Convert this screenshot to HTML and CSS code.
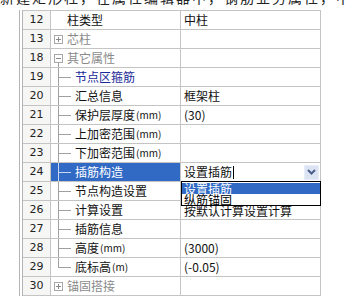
FILE: index.html
```html
<!DOCTYPE html>
<html lang="zh-CN">
<head>
	<meta charset="UTF-8">
	<title>属性编辑</title>
	<link rel="stylesheet" href="styles.css">
</head>
<body>
	<div class="caption"><p>新建矩形柱，在属性编辑器中，钢筋业务属性，中柱，插筋信息</p></div>
	<div class="sheet">
		<div class="grid">
			<div class="row">
				<div class="num">12</div>
				<div class="label plain">柱类型</div>
				<div class="value">中柱</div>
			</div>
			<div class="row">
				<div class="num">13</div>
				<div class="label group"><span class="box plus"></span>芯柱</div>
				<div class="value"></div>
			</div>
			<div class="row">
				<div class="num">18</div>
				<div class="label group open"><span class="box"></span>其它属性</div>
				<div class="value"></div>
			</div>
			<div class="row">
				<div class="num">19</div>
				<div class="label child blue">节点区箍筋</div>
				<div class="value"></div>
			</div>
			<div class="row">
				<div class="num">20</div>
				<div class="label child">汇总信息</div>
				<div class="value">框架柱</div>
			</div>
			<div class="row">
				<div class="num">21</div>
				<div class="label child">保护层厚度<small>(mm)</small></div>
				<div class="value">(30)</div>
			</div>
			<div class="row">
				<div class="num">22</div>
				<div class="label child">上加密范围<small>(mm)</small></div>
				<div class="value"></div>
			</div>
			<div class="row">
				<div class="num">23</div>
				<div class="label child">下加密范围<small>(mm)</small></div>
				<div class="value"></div>
			</div>
			<div class="row">
				<div class="num">24</div>
				<div class="label child selected">插筋构造</div>
				<div class="value combo">
					<span class="combo-text">设置插筋</span><span class="caret"></span>
					<span class="arrow">
						<svg width="9" height="6" viewBox="0 0 9 6"><path d="M1 1 L4.5 4.5 L8 1" fill="none" stroke="#4a5f8c" stroke-width="2"/></svg>
					</span>
					<ul class="list">
						<li class="on">设置插筋</li>
						<li>纵筋锚固</li>
					</ul>
				</div>
			</div>
			<div class="row">
				<div class="num">25</div>
				<div class="label child">节点构造设置</div>
				<div class="value"></div>
			</div>
			<div class="row">
				<div class="num">26</div>
				<div class="label child">计算设置</div>
				<div class="value low">按默认计算设置计算</div>
			</div>
			<div class="row">
				<div class="num">27</div>
				<div class="label child">插筋信息</div>
				<div class="value"></div>
			</div>
			<div class="row">
				<div class="num">28</div>
				<div class="label child">高度<small>(mm)</small></div>
				<div class="value">(3000)</div>
			</div>
			<div class="row">
				<div class="num">29</div>
				<div class="label child last">底标高<small>(m)</small></div>
				<div class="value">(-0.05)</div>
			</div>
			<div class="row">
				<div class="num">30</div>
				<div class="label group"><span class="box plus"></span>锚固搭接</div>
				<div class="value"></div>
			</div>
		</div>
	</div>
</body>
</html>
```

FILE: styles.css
```css
body{
	margin: 0;
	background: #fff;
	font-family: "Noto Sans CJK SC", "Liberation Sans", sans-serif;
	font-size: 12px;
	color: #111;
}
.caption{
	height: 10px;
	overflow: hidden;
}
.caption p{
	margin: -10px 0 0 0;
	font-size: 14px;
	line-height: 14px;
	white-space: nowrap;
	color: #222;
	letter-spacing: 2px;
}
.sheet{
	margin-left: 19px;
	width: 302px;
	border-left: 1px solid #b4b4b4;
	padding-left: 2px;
}
.grid{
	width: 298px;
	border-left: 1px solid #b4b4b4;
	border-top: 1px solid #c4c4c4;
}
.row{
	display: grid;
	grid-template-columns: 28px 130px 140px;
	height: 19px;
	border-bottom: 1px solid #c4c4c4;
	box-sizing: border-box;
}
.row > div{
	border-right: 1px solid #c4c4c4;
	height: 18px;
	line-height: 18px;
	white-space: nowrap;
	overflow: hidden;
}
.num{
	background: #f6f6f4;
	text-align: center;
	font-family: "DejaVu Sans", sans-serif;
	font-size: 11px;
	color: #222;
}
.label{
	display: flex;
	align-items: center;
}
.label small{
	font-size: 10px;
	margin-left: 1px;
}
.plain{
	padding-left: 16px;
}
.group{
	color: #8a8a8a;
}
.box{
	width: 7px;
	height: 7px;
	border: 1px solid #a8a8a8;
	margin: 0 4px 0 3px;
	background:
		linear-gradient(#8a8a8a,#8a8a8a) no-repeat 1px 3px / 5px 1px;
}
.box.plus{
	background:
		linear-gradient(#8a8a8a,#8a8a8a) no-repeat 1px 3px / 5px 1px,
		linear-gradient(#8a8a8a,#8a8a8a) no-repeat 3px 1px / 1px 5px;
}
.open{
	background: linear-gradient(#a0a0a0,#a0a0a0) no-repeat 7px 14px / 1px 4px;
}
.child{
	padding-left: 24px;
	background:
		linear-gradient(#a0a0a0,#a0a0a0) no-repeat 7px 0 / 1px 100%,
		linear-gradient(#a0a0a0,#a0a0a0) no-repeat 7px 9px / 13px 1px;
}
.child.last{
	background:
		linear-gradient(#a0a0a0,#a0a0a0) no-repeat 7px 0 / 1px 10px,
		linear-gradient(#a0a0a0,#a0a0a0) no-repeat 7px 9px / 13px 1px;
}
.blue{
	color: #1a2a9a;
}
.child.selected{
	color: #fff;
	background:
		linear-gradient(#c9d6f0,#c9d6f0) no-repeat 7px 0 / 1px 100%,
		linear-gradient(#c9d6f0,#c9d6f0) no-repeat 7px 9px / 13px 1px,
		#316ac5;
}
.value{
	padding-left: 3px;
}
.row > .low{
	line-height: 20px;
}
.row > .combo{
	position: relative;
	display: flex;
	align-items: center;
	overflow: visible;
}
.caret{
	width: 1px;
	height: 13px;
	background: #000;
	margin-left: 1px;
}
.arrow{
	margin-left: auto;
	margin-right: 1px;
	width: 15px;
	height: 15px;
	background: #dce4f4;
	border: 1px solid #e8eef9;
	box-sizing: border-box;
	display: flex;
	align-items: center;
	justify-content: center;
}
.list{
	position: absolute;
	left: 0;
	top: 18px;
	width: 138px;
	margin: 0;
	padding: 1px 0 0 0;
	list-style: none;
	background: #fff;
	border: 1px solid #000;
	z-index: 2;
}
.list li{
	height: 11px;
	line-height: 11px;
	padding-left: 2px;
	font-size: 12px;
	color: #000;
	overflow: hidden;
}
.list li.on{
	background: #316ac5;
	color: #fff;
}
```
